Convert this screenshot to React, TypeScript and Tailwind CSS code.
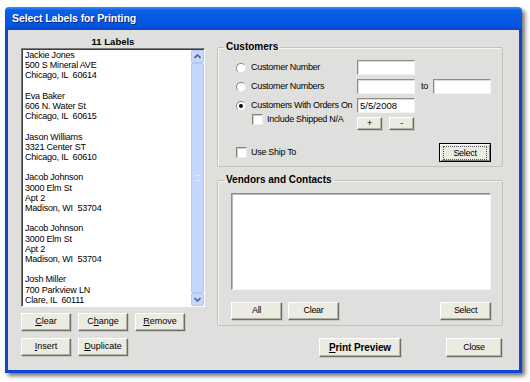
import type { ReactNode } from 'react';

const FONT = "font-['Liberation_Sans',Arial,sans-serif]";

const LABELS: string[][] = [
  ['Jackie Jones', '500 S Mineral AVE', 'Chicago, IL  60614'],
  ['Eva Baker', '606 N. Water St', 'Chicago, IL  60615'],
  ['Jason Williams', '3321 Center ST', 'Chicago, IL  60610'],
  ['Jacob Johnson', '3000 Elm St', 'Apt 2', 'Madison, WI  53704'],
  ['Jacob Johnson', '3000 Elm St', 'Apt 2', 'Madison, WI  53704'],
  ['Josh Miller', '700 Parkview LN', 'Clare, IL  60111'],
];

function Btn({ children, w, h = 'h-[18px]', focused = false, bold = false }: { children: ReactNode; w: string; h?: string; focused?: boolean; bold?: boolean }) {
  return (
    <button
      className={`${w} ${h} shrink-0 flex items-center justify-center bg-[#ecebe2] text-[9px] text-black whitespace-nowrap ${bold ? 'font-bold text-[10px] tracking-[-0.1px]' : ''} ${
        focused
          ? 'border border-black shadow-[inset_1px_1px_0_#fff,inset_-1px_-1px_0_#7a7a72]'
          : 'border border-t-white border-l-white border-r-[#6e6e68] border-b-[#6e6e68] shadow-[inset_-1px_-1px_0_#b3b2a9,1px_1px_0_#c9c8c0]'
      }`}
    >
      {focused ? <span className="px-[9px] leading-[12px] outline outline-1 outline-dotted outline-[#555]">{children}</span> : children}
    </button>
  );
}

function TextBox({ w, children }: { w: string; children?: ReactNode }) {
  return (
    <div className={`${w} h-[15px] shrink-0 bg-white border border-t-[#8d8d88] border-l-[#8d8d88] border-r-[#f6f6f2] border-b-[#f6f6f2] shadow-[inset_1px_1px_0_#dcdbd5] text-[9.5px] leading-[13px] pl-[2px] tracking-normal`}>
      {children}
    </div>
  );
}

function Radio({ checked = false }: { checked?: boolean }) {
  return (
    <div className="w-[10px] h-[10px] shrink-0 rounded-full bg-white border border-t-[#8a8a86] border-l-[#8a8a86] border-r-[#e6e6e2] border-b-[#e6e6e2] flex items-center justify-center">
      {checked && <div className="w-[4px] h-[4px] rounded-full bg-black" />}
    </div>
  );
}

function Check() {
  return <div className="w-[11px] h-[11px] shrink-0 bg-white border border-t-[#84847f] border-l-[#84847f] border-r-[#eeeeea] border-b-[#eeeeea] shadow-[inset_1px_1px_0_#cfcec8]" />;
}

function U({ children }: { children: ReactNode }) {
  return <span className="underline underline-offset-1">{children}</span>;
}

function Chevron({ up }: { up: boolean }) {
  return (
    <svg width="7" height="5" viewBox="0 0 7 5">
      <path d={up ? 'M0.5 4 L3.5 1 L6.5 4' : 'M0.5 1 L3.5 4 L6.5 1'} fill="none" stroke="#4d6185" strokeWidth="1.6" />
    </svg>
  );
}

function Group({ title, h, children }: { title: string; h: string; children: ReactNode }) {
  return (
    <fieldset className={`${h} border border-[#c3c2bc] rounded-[2px] shadow-[inset_1px_1px_0_#f4f4f0]`}>
      <legend className="ml-[6px] px-[2px] text-[10px] font-bold leading-[12px] tracking-normal">{title}</legend>
      {children}
    </fieldset>
  );
}

export default function App() {
  return (
    <div className={`w-[530px] h-[382px] bg-white pt-[7px] pl-[5px] ${FONT} text-black`}>
      <div className="w-[517px] h-[366px] flex flex-col rounded-t-[4px] shadow-[3px_3px_4px_rgba(0,0,0,0.55)]">
        {/* title bar */}
        <div className="h-[23px] shrink-0 rounded-t-[4px] flex items-center pl-[7px] bg-[linear-gradient(180deg,#3c8ef7_0%,#0b61e8_14%,#0758e2_50%,#0554df_85%,#0946c6_100%)]">
          <span className="text-white font-bold text-[10.5px] tracking-[-0.1px] [text-shadow:1px_1px_0_#0c2677]">Select Labels for Printing</span>
        </div>

        {/* client area */}
        <div className="flex-1 flex border-x-[3px] border-b-[3px] border-[#0b47d2] bg-[#dfdfdd] pl-[13px]">
          {/* left column */}
          <div className="w-[184px] shrink-0 pt-[5px] flex flex-col">
            <div className="h-[13px] leading-[13px] text-center text-[9.5px] font-bold">11 Labels</div>
            <div className="h-[259px] flex bg-white border border-t-[#7b7b78] border-l-[#7b7b78] border-r-white border-b-white shadow-[inset_1px_1px_0_#3f3f3f]">
              <div className="flex-1 overflow-hidden pl-[3px] pt-[1px] text-[9px] leading-[10.2px] tracking-[-0.2px] whitespace-pre">
                {LABELS.map((lines, i) => (
                  <div key={i}>
                    {lines.map((l, j) => (
                      <div key={j}>{l}</div>
                    ))}
                    {i < LABELS.length - 1 && <div>&nbsp;</div>}
                  </div>
                ))}
              </div>
              <div className="w-[13px] shrink-0 flex flex-col bg-[#f3f3ee] mt-[1px]">
                <div className="h-[13px] flex items-center justify-center bg-[#c8d7fc] border border-[#b4c7f5] rounded-[2px]">
                  <Chevron up />
                </div>
                <div className="flex-1 bg-[#c6d6fc] border border-[#b6c8f4] rounded-[2px] flex items-center justify-center">
                  <div className="w-[5px] h-[6px] border-y border-[#e6eefe]" />
                </div>
                <div className="h-[13px] flex items-center justify-center bg-[#c8d7fc] border border-[#b4c7f5] rounded-[2px]">
                  <Chevron up={false} />
                </div>
              </div>
            </div>
            <div className="flex gap-[7px] mt-[6px]">
              <Btn w="w-[50px]"><U>C</U>lear</Btn>
              <Btn w="w-[50px]">C<U>h</U>ange</Btn>
              <Btn w="w-[50px]"><U>R</U>emove</Btn>
            </div>
            <div className="flex gap-[7px] mt-[7px]">
              <Btn w="w-[50px]"><U>I</U>nsert</Btn>
              <Btn w="w-[50px]"><U>D</U>uplicate</Btn>
            </div>
          </div>

          {/* right column */}
          <div className="w-[286px] shrink-0 ml-[12px] pt-[11px] flex flex-col text-[9px] tracking-[-0.3px] whitespace-nowrap">
            <Group title="Customers" h="h-[126px]">
              <div className="pl-[18px] pt-[7px] pr-[11px] flex flex-col">
                <div className="flex items-center h-[15px]">
                  <div className="w-[121px] flex items-center gap-[5px]"><Radio /><span>Customer Number</span></div>
                  <TextBox w="w-[58px]" />
                </div>
                <div className="flex items-center h-[15px] mt-[4px]">
                  <div className="w-[121px] flex items-center gap-[5px]"><Radio /><span>Customer Numbers</span></div>
                  <TextBox w="w-[58px]" />
                  <span className="ml-[6px] w-[12px]">to</span>
                  <TextBox w="w-[58px]" />
                </div>
                <div className="flex items-center h-[15px] mt-[4px]">
                  <div className="w-[121px] flex items-center gap-[5px]"><Radio checked /><span>Customers With Orders On</span></div>
                  <TextBox w="w-[58px]">5/5/2008</TextBox>
                </div>
                <div className="flex items-start h-[17px]">
                  <div className="w-[121px] pl-[16px] flex items-center gap-[4px]"><Check /><span>Include Shipped N/A</span></div>
                  <div className="flex gap-[7px] mt-[4px]">
                    <Btn w="w-[25px]" h="h-[13px]">+</Btn>
                    <Btn w="w-[25px]" h="h-[13px]">-</Btn>
                  </div>
                </div>
                <div className="flex items-center mt-[13px] h-[19px]">
                  <div className="flex items-center gap-[4px]"><Check /><span>Use Ship To</span></div>
                  <div className="ml-auto"><Btn w="w-[52px]" h="h-[19px]" focused>Select</Btn></div>
                </div>
              </div>
            </Group>

            <div className="mt-[7px]">
              <Group title="Vendors and Contacts" h="h-[152px]">
                <div className="pl-[13px] pr-[11px] pt-[7px] flex flex-col">
                  <div className="h-[97px] w-[260px] bg-white border border-t-[#8d8d88] border-l-[#8d8d88] border-r-[#f6f6f2] border-b-[#f6f6f2] shadow-[inset_1px_1px_0_#b8b7b1]" />
                  <div className="flex mt-[12px]">
                    <Btn w="w-[51px]">All</Btn>
                    <div className="ml-[6px]"><Btn w="w-[51px]">Clear</Btn></div>
                    <div className="ml-auto"><Btn w="w-[51px]">Select</Btn></div>
                  </div>
                </div>
              </Group>
            </div>

            <div className="flex mt-[12px]">
              <div className="ml-[102px]"><Btn w="w-[82px]" h="h-[19px]" bold><U>P</U>rint Preview</Btn></div>
              <div className="ml-[45px]"><Btn w="w-[56px]" h="h-[19px]">Close</Btn></div>
            </div>
          </div>
        </div>
      </div>
    </div>
  );
}
